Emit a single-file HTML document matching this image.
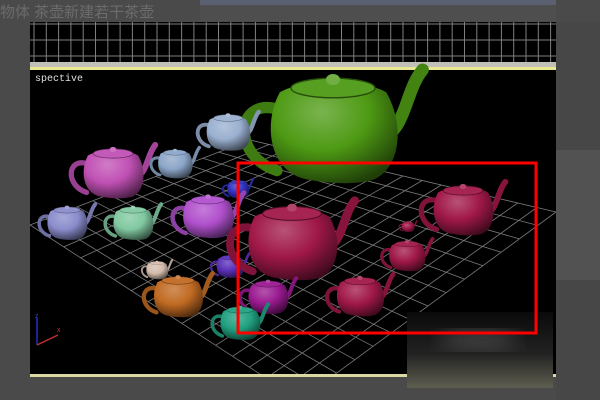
<!DOCTYPE html>
<html><head><meta charset="utf-8"><style>
html,body{margin:0;padding:0;width:600px;height:400px;overflow:hidden;background:#4a4a4a}
svg{display:block}
</style></head><body>
<svg id="s" width="600" height="400" viewBox="0 0 600 400" xmlns="http://www.w3.org/2000/svg">
<defs>
<filter id="bl"><feGaussianBlur stdDeviation="10"/></filter>
<linearGradient id="patch" x1="0" y1="0" x2="0" y2="1">
<stop offset="0" stop-color="#0a0a0a"/><stop offset="0.55" stop-color="#222"/><stop offset="1" stop-color="#5e5e50"/></linearGradient>
</defs>
<rect width="600" height="400" fill="#4a4a4a"/>
<rect x="200" y="0" width="356" height="5" fill="#5a6070"/>
<rect x="200" y="5" width="356" height="17" fill="#4e4e4e"/>
<rect x="556" y="22" width="44" height="378" fill="#474747"/>
<rect x="556" y="150" width="44" height="130" fill="#525252"/>
<text x="0" y="17" font-family="Liberation Sans, Noto Sans CJK SC, sans-serif" font-size="15" fill="#6c6c6c">物体 茶壶新建若干茶壶</text>
<rect x="30" y="22" width="526" height="40" fill="#000"/>
<g id="tg" stroke="#808080" stroke-width="1"></g>
<rect x="30" y="62" width="526" height="6" fill="#c0c0b8"/>
<rect x="30" y="67" width="526" height="3" fill="#e8e890"/>
<rect x="30" y="70" width="526" height="304" fill="#000"/>
<g id="grid" stroke="#7a7a7a" stroke-width="0.8" fill="none"></g>
<g id="pots"></g>
<text x="35" y="81" font-family="Liberation Mono, monospace" font-size="10" fill="#e0e0e0">spective</text>
<g stroke-width="1.5"><line x1="37" y1="345" x2="37" y2="318" stroke="#2030c0"/><line x1="37" y1="345" x2="58" y2="335" stroke="#c03030"/></g>
<text x="35" y="318" font-size="7" fill="#3040d0" font-family="Liberation Sans,sans-serif">z</text>
<text x="57" y="332" font-size="7" fill="#d03030" font-family="Liberation Sans,sans-serif">x</text>
<rect x="30" y="374" width="526" height="3" fill="#d8d8a0"/>
<rect x="30" y="377" width="526" height="23" fill="#4a4a4a"/>
<rect x="407" y="312" width="146" height="76" fill="url(#patch)"/>
<ellipse cx="478" cy="340" rx="40" ry="10" fill="#444" filter="url(#bl)"/>
<rect x="238" y="163" width="298" height="170" fill="none" stroke="#f00" stroke-width="3"/>
</svg>
<script>
var NS="http://www.w3.org/2000/svg";
function el(p,t,a){var e=document.createElementNS(NS,t);for(var k in a)e.setAttribute(k,a[k]);p.appendChild(e);return e;}
var tg=document.getElementById('tg');
for(var x=34;x<556;x+=12.3)el(tg,'line',{x1:x,y1:22,x2:x,y2:62});
[24,40,56].forEach(function(y){el(tg,'line',{x1:30,y1:y,x2:556,y2:y});});
var g=document.getElementById('grid');
var A=[30,225],B=[250,140],C=[556,212],D=[300,400];
function P(u,v){var x=(1-u)*(1-v)*A[0]+u*(1-v)*B[0]+u*v*C[0]+(1-u)*v*D[0];var y=(1-u)*(1-v)*A[1]+u*(1-v)*B[1]+u*v*C[1]+(1-u)*v*D[1];return x.toFixed(1)+','+y.toFixed(1);}
var N=14,M=16;
for(var i=0;i<=N;i++){var u=i/N;el(g,'path',{d:'M'+P(u,0)+'L'+P(u,1)});}
for(var j=0;j<=M;j++){var v=j/M;el(g,'path',{d:'M'+P(0,v)+'L'+P(1,v)});}
var pots=document.getElementById('pots');
var id=0;
function shade(c,f){var n=parseInt(c.slice(1),16);var r=n>>16,gg=(n>>8)&255,b=n&255;function m(v){return Math.max(0,Math.min(255,Math.round(f>1?v+(255-v)*(f-1):v*f)));}return 'rgb('+m(r)+','+m(gg)+','+m(b)+')';}
function pot(cx,cy,w,c){
 id++;var s=w/100;
 var d=document.querySelector('defs');
 var rg=el(d,'radialGradient',{id:'g'+id,cx:'0.4',cy:'0.3',r:'0.75'});
 el(rg,'stop',{offset:'0','stop-color':shade(c,1.25)});
 el(rg,'stop',{offset:'0.5','stop-color':c});
 el(rg,'stop',{offset:'1','stop-color':shade(c,0.4)});
 var gr=el(pots,'g',{transform:'translate('+cx+','+cy+') scale('+s+')'});
 el(gr,'path',{d:'M-40,-10 C-70,-18 -72,24 -40,34',stroke:shade(c,0.8),'stroke-width':8,fill:'none','stroke-linecap':'round'});
 el(gr,'path',{d:'M36,10 C52,4 52,-24 64,-38',stroke:shade(c,0.85),'stroke-width':9,fill:'none','stroke-linecap':'round'});
 el(gr,'path',{d:'M-38,-22 C-50,0 -46,34 -20,40 C0,44 20,44 30,40 C50,30 50,-2 38,-22 C20,-32 -20,-32 -38,-22Z',fill:'url(#g'+id+')'});
 el(gr,'ellipse',{cx:0,cy:-25,rx:30,ry:7,fill:shade(c,1.05),stroke:shade(c,0.5),'stroke-width':1});
 el(gr,'ellipse',{cx:0,cy:-31,rx:5,ry:4,fill:shade(c,1.2)});
}
pot(333,123,140,'#4e9a14');
pot(228,130,48,'#9ab0d0');
pot(113,170,66,'#c050b4');
pot(175,162,38,'#8ca6c8');
pot(238,188,24,'#3030c0');
pot(67,221,44,'#8a8ccc');
pot(133,221,44,'#80c8a0');
pot(208,214,56,'#b050cc');
pot(230,265,30,'#5a30b8');
pot(157,269,24,'#d4bcac');
pot(178,294,54,'#c06a22');
pot(463,207,66,'#a01848');
pot(408,226,14,'#a01848');
pot(407,254,40,'#a01848');
pot(292,238,98,'#a01848');
pot(268,295,44,'#9a1a90');
pot(360,294,52,'#a01848');
pot(240,321,44,'#20a080');
</script>
</body></html>
